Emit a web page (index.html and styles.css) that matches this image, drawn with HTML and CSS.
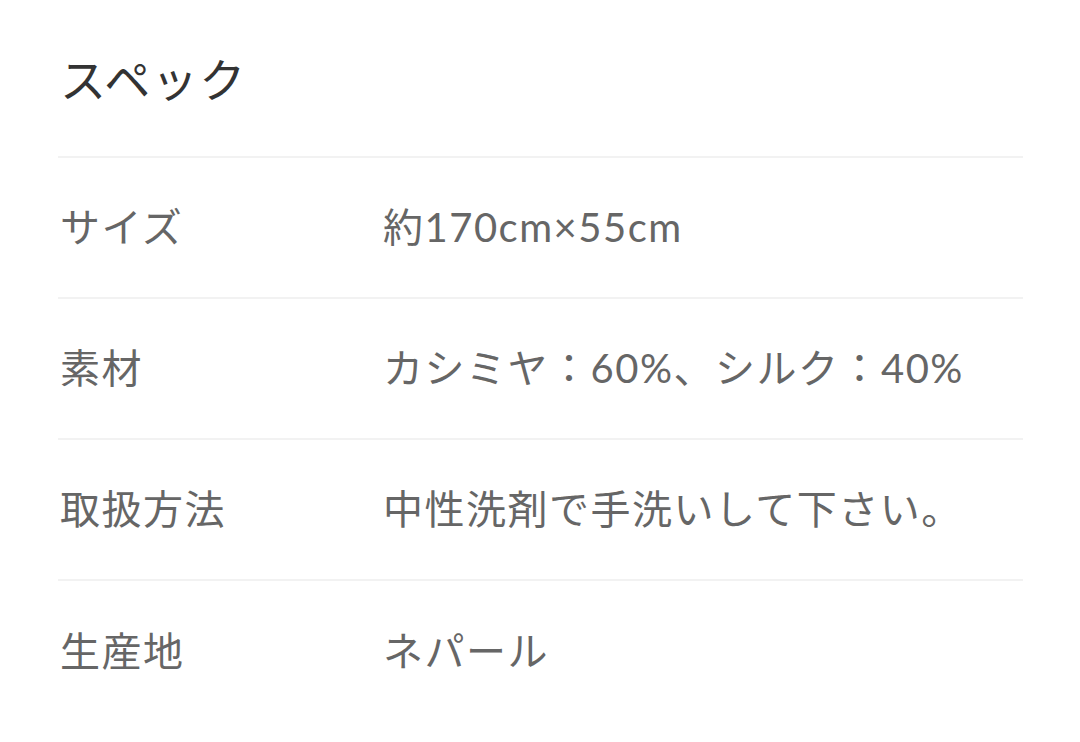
FILE: index.html
```html
<!DOCTYPE html>
<html lang="ja">
<head>
    <meta charset="UTF-8">
    <meta name="viewport" content="width=device-width, initial-scale=1.0">
    <title>スペック</title>
    <link rel="stylesheet" href="styles.css">
</head>
<body>
    <section class="spec">
        <h2 class="spec-title">スペック</h2>
        <div class="spec-row">
            <div class="spec-label">サイズ</div>
            <div class="spec-value">約170cm×55cm</div>
        </div>
        <div class="spec-row">
            <div class="spec-label">素材</div>
            <div class="spec-value">カシミヤ：60%、シルク：40%</div>
        </div>
        <div class="spec-row">
            <div class="spec-label">取扱方法</div>
            <div class="spec-value">中性洗剤で手洗いして下さい。</div>
        </div>
        <div class="spec-row">
            <div class="spec-label">生産地</div>
            <div class="spec-value">ネパール</div>
        </div>
    </section>
</body>
</html>
```

FILE: styles.css
```css
* {
    margin: 0;
    padding: 0;
    box-sizing: border-box;
}

body {
    background: #ffffff;
    font-family: Lato, "Noto Sans CJK JP", sans-serif;
    letter-spacing: 1.5px;
}

.spec {
    width: 965px;
    margin-left: 58px;
}

.spec-title {
    font-size: 46px;
    font-weight: 400;
    line-height: 69px;
    color: #333333;
    padding: 45px 0 42px 2px;
    border-bottom: 2px solid #f2f2f2;
}

.spec-row {
    display: flex;
    align-items: center;
    height: 141px;
    padding-bottom: 6px;
    border-bottom: 2px solid #f2f2f2;
    font-size: 40px;
    color: #666666;
}

.spec-row:last-child {
    border-bottom: none;
}

.spec-label {
    width: 325px;
    padding-left: 2px;
}
```
